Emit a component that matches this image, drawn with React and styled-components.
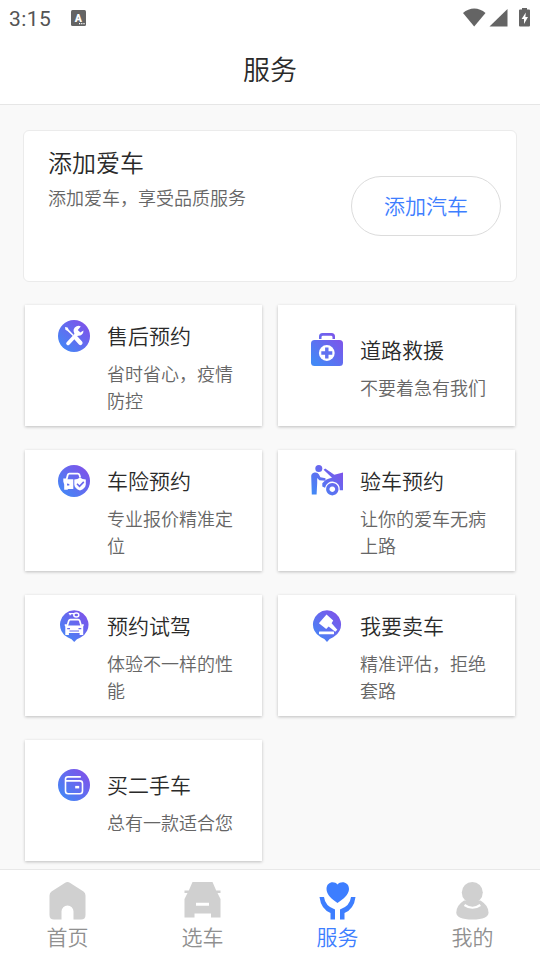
import { useState } from "react";
import styled, { createGlobalStyle } from "styled-components";

const services = [
  { title: "售后预约", desc: "省时省心，疫情防控", icon: RepairIcon },
  { title: "道路救援", desc: "不要着急有我们", icon: RescueIcon },
  { title: "车险预约", desc: "专业报价精准定位", icon: InsuranceIcon },
  { title: "验车预约", desc: "让你的爱车无病上路", icon: InspectIcon },
  { title: "预约试驾", desc: "体验不一样的性能", icon: TestDriveIcon },
  { title: "我要卖车", desc: "精准评估，拒绝套路", icon: SellIcon },
  { title: "买二手车", desc: "总有一款适合您", icon: WalletIcon },
];

const tabs = [
  { label: "首页", icon: HomeIcon },
  { label: "选车", icon: CarIcon },
  { label: "服务", icon: ServiceIcon },
  { label: "我的", icon: MineIcon },
];

function App() {
  const [active, setActive] = useState("服务");

  return (
    <Screen>
      <GlobalStyle />
      <StatusBar>
        <Time>3:15</Time>
        <KeyboardIcon />
        <StatusIcons />
      </StatusBar>
      <Header>服务</Header>
      <Content>
        <AddCard>
          <AddText>
            <AddTitle>添加爱车</AddTitle>
            <AddDesc>添加爱车，享受品质服务</AddDesc>
          </AddText>
          <AddButton>添加汽车</AddButton>
        </AddCard>
        <ServiceGrid>
          {services.map(({ title, desc, icon: Icon }) => (
            <ServiceCard key={title}>
              <ServiceBody>
                <IconSlot>
                  <Icon />
                </IconSlot>
                <ServiceText>
                  <ServiceTitle>{title}</ServiceTitle>
                  <ServiceDesc>{desc}</ServiceDesc>
                </ServiceText>
              </ServiceBody>
            </ServiceCard>
          ))}
        </ServiceGrid>
      </Content>
      <TabBar>
        {tabs.map(({ label, icon: Icon }) => (
          <Tab
            key={label}
            $active={active === label}
            onClick={() => setActive(label)}
          >
            <Icon />
            <TabLabel $active={active === label}>{label}</TabLabel>
          </Tab>
        ))}
      </TabBar>
    </Screen>
  );
}

function KeyboardIcon() {
  return (
    <svg width="15" height="16" viewBox="0 0 15 16">
      <rect width="15" height="16" rx="1.5" fill="#646464" />
      <KeyboardLetter x="7.4" y="11.6" textAnchor="middle">
        A
      </KeyboardLetter>
      <path d="M8 13.6h1.2M10.2 13.6h1.2M12.4 13.6h1.2" stroke="#fff" strokeWidth="1.2" />
    </svg>
  );
}

function StatusIcons() {
  return (
    <StatusRight width="70" height="20" viewBox="0 0 70 20" fill="#646464">
      <path d="M0 5C6.500-1 16-1 22.500 5L11.200 18.500Z" />
      <path d="M44.500 1V18.500H26.500Z" />
      <path d="M59 1.500V0H64V1.500H66Q67 1.500 67 2.500V17.500Q67 18.500 66 18.500H57Q56 18.500 56 17.500V2.500Q56 1.500 57 1.500Z" />
      <path d="M62.800 4.500 58.600 11H61V16L65 9H62.400Z" fill="#fff" />
    </StatusRight>
  );
}

function Gradient({ id }) {
  return (
    <defs>
      <linearGradient id={id} x1="3" y1="29" x2="28" y2="4" gradientUnits="userSpaceOnUse">
        <stop offset="0" stopColor="#4388f6" />
        <stop offset="1" stopColor="#7d54ea" />
      </linearGradient>
    </defs>
  );
}

function RepairIcon() {
  return (
    <svg width="32" height="32" viewBox="0 0 32 32">
      <Gradient id="repair" />
      <circle cx="16" cy="16" r="16" fill="url(#repair)" />
      <path d="M10 23.400 20 12.800" stroke="#fff" strokeWidth="3.6" strokeLinecap="round" />
      <path
        d="M22.800 6.400A5 5 0 1 0 25.500 10.600L22.200 12.400 19.800 10Z"
        fill="#fff"
      />
      <path d="M7 7 9.600 7.600 10.800 9.800 15.800 15 14.800 16 9.500 11 7.400 9.800Z" fill="#fff" />
      <path d="M18 18 22.500 23" stroke="#fff" strokeWidth="4.2" strokeLinecap="round" />
    </svg>
  );
}

function RescueIcon() {
  return (
    <RescueSvg width="32" height="34" viewBox="0 0 32 34">
      <Gradient id="rescue" />
      <g fill="url(#rescue)">
        <path d="M8 6V3.500Q8 0 11.500 0H20.500Q24 0 24 3.500V6H21.500V4.200Q21.500 2.800 20 2.800H12Q10.500 2.800 10.500 4.200V6Z" />
        <rect y="7" width="32" height="26" rx="3.500" />
      </g>
      <circle cx="15.800" cy="20" r="7.900" fill="#fff" />
      <path d="M15.800 14.500V25.500M10.300 20H21.300" stroke="#6072f0" strokeWidth="3.400" />
    </RescueSvg>
  );
}

function InsuranceIcon() {
  return (
    <svg width="32" height="32" viewBox="0 0 32 32">
      <Gradient id="insurance" />
      <circle cx="16" cy="16" r="16" fill="url(#insurance)" />
      <path
        d="M8.300 15.500 9.800 9.800Q10.200 8.600 11.400 8.600H19.800Q21 8.600 21.400 9.800L22.200 12.500"
        fill="none"
        stroke="#fff"
        strokeWidth="1.800"
      />
      <path d="M5.300 13.500H8L9 14.300H15.300V24H9.800V24.800H6.200V19.500L5.300 16.500Z" fill="#fff" />
      <path d="M9 18.600 11.300 19V20.500H9Z" fill="#6172f0" />
      <path
        d="M22 12.600Q24.300 14.500 27.800 14.600V19.500Q27.400 23.500 22 25.500 16.600 23.500 16.300 19.500V14.600Q19.700 14.500 22 12.600Z"
        fill="#fff"
      />
      <path d="M19 18.800 21.500 21.300 25.800 16.900" fill="none" stroke="#6967ed" strokeWidth="1.600" />
    </svg>
  );
}

function InspectIcon() {
  return (
    <svg width="32" height="32" viewBox="0 0 32 32">
      <Gradient id="inspect" />
      <g fill="url(#inspect)">
        <circle cx="7.800" cy="3.500" r="3.500" />
        <path d="M3.500 7.500Q6.500 7 7.800 9.300L9.400 12.300 14.500 13.200V15.700L8.300 15.200 6.200 13V18L5.600 29.500H.8L.2 11Q.4 8 3.500 7.500Z" />
        <path d="M12.600 4.800 14.200 3.400 23.300 9.800 32 7.500V25.300H28.800A7.500 7.500 0 0 0 14 22.800L11.300 21.600V18.200Q15 13.600 21 12.700Z" />
        <path
          fillRule="evenodd"
          d="M21.300 18A6.200 6.200 0 1 1 21.290 18ZM21.300 21.400A2.800 2.800 0 1 0 21.310 21.400Z"
        />
      </g>
    </svg>
  );
}

function TestDriveIcon() {
  return (
    <svg width="32" height="32" viewBox="0 0 32 32">
      <Gradient id="drive" />
      <path
        d="M16.200 .3A14.400 14.400 0 0 1 22.500 27.600Q18.500 29 16.200 32 14 29 10 27.600A14.400 14.400 0 0 1 16.200 .3Z"
        fill="url(#drive)"
      />
      <path d="M10.800 3.600H16M12.200 3.600V5.200" stroke="#fff" strokeWidth="1.300" />
      <ellipse cx="18.300" cy="4.900" rx="2.500" ry="2" fill="none" stroke="#fff" strokeWidth="1.500" />
      <path
        d="M9.200 16 10.800 10.800Q11.200 9.700 12.300 9.700H20.200Q21.300 9.700 21.700 10.800L23.300 16"
        fill="none"
        stroke="#fff"
        strokeWidth="1.700"
      />
      <path d="M6.700 14.200H8.800V15.600H23.700V14.200H25.800V15.600L25.200 16.500V25H21.600V22.900H10.900V25H7.300V16.500L6.700 15.600Z" fill="#fff" />
      <path d="M9.200 18.700H12M20.500 18.700H23.300M11.500 21H21" stroke="#686bed" strokeWidth="1.200" />
    </svg>
  );
}

function SellIcon() {
  return (
    <svg width="32" height="32" viewBox="0 0 32 32">
      <Gradient id="sell" />
      <path
        d="M16 .3A14.200 14.200 0 0 1 22.200 27.200Q18.300 28.500 16 32 13.700 28.500 9.800 27.200A14.200 14.200 0 0 1 16 .3Z"
        fill="url(#sell)"
      />
      <path d="M15.500 4.600 22.200 10.600 20.600 13.200 26.300 19.800 24.300 21.800 17.600 16.500 15.200 19 7.900 13.200Z" fill="#fff" />
      <rect x="8" y="21.400" width="15" height="2.800" rx=".5" fill="#fff" />
    </svg>
  );
}

function WalletIcon() {
  return (
    <svg width="32" height="32" viewBox="0 0 32 32">
      <Gradient id="wallet" />
      <circle cx="16" cy="16" r="16" fill="url(#wallet)" />
      <path
        d="M22.800 7.900H10Q7.500 7.900 7.500 10V22Q7.500 24.700 10.200 24.700H21.800Q24.500 24.700 24.500 22V14.500Q24.500 11.900 21.800 11.900H7.500"
        fill="none"
        stroke="#fff"
        strokeWidth="1.600"
      />
      <rect x="17.200" y="16.900" width="4" height="2.500" fill="#fff" />
    </svg>
  );
}

function HomeIcon() {
  return (
    <svg width="37" height="38" viewBox="0 0 37 38" fill="currentColor">
      <path d="M15.800 1Q18.500-.8 21.200 1L34.500 9.500Q36.500 11 36.500 13.500V33Q36.500 37.500 32 37.500H24.500V29.500A6 6 0 0 0 12.500 29.500V37.500H5Q.5 37.500 .5 33V13.500Q.5 11 2.500 9.500Z" />
    </svg>
  );
}

function CarIcon() {
  return (
    <svg width="37" height="38" viewBox="0 0 37 38" fill="currentColor">
      <path
        fillRule="evenodd"
        d="M8.500 0H28.500L32.200 8.500H36.500V11H33.500L36.500 17V35.500H27V31.500H10.500V35.500H.5V17L3.500 11H.5V8.500H4.800ZM12 20.700V23.800H25V20.700Z"
      />
    </svg>
  );
}

function ServiceIcon() {
  return (
    <svg width="37" height="38" viewBox="0 0 37 38" fill="currentColor">
      <path d="M18.500 2.500C21.500-1.500 30-.5 30 7 30 12.500 24 17.500 18.500 21 13 17.500 7.500 12.500 7.500 7 7.500-.5 15.500-1.500 18.500 2.500Z" />
      <path d="M.5 15H5Q6 24 16 27.500V37.500H11.500V31Q2 27 .5 15ZM36.500 15H32Q31 24 21 27.500V37.500H25.500V31Q35 27 36.500 15Z" />
    </svg>
  );
}

function MineIcon() {
  return (
    <svg width="37" height="38" viewBox="0 0 37 38" fill="currentColor">
      <circle cx="18.300" cy="10.500" r="10.500" />
      <path d="M10 18.500H26.500Q34.500 23.500 34.500 30.500 34.500 37.500 18.500 37.500 2.300 37.500 2.300 30.500 2.300 23.500 10 18.500Z" />
      <path d="M10.500 23Q18.500 28.500 26.300 23" fill="none" stroke="#fff" strokeWidth="2.200" />
    </svg>
  );
}

const GlobalStyle = createGlobalStyle`
  * {
    box-sizing: border-box;
  }

  body {
    margin: 0;
    font-family: "Noto Sans CJK SC", sans-serif;
    font-weight: 350;
  }
`;

const Screen = styled.div`
  display: flex;
  flex-direction: column;
  width: 540px;
  height: 960px;
  overflow: hidden;
  background: #f9f9f9;
`;

const StatusBar = styled.div`
  display: flex;
  flex-shrink: 0;
  align-items: center;
  height: 36px;
  padding: 0 7px 0 9px;
  background: #fff;
`;

const Time = styled.span`
  width: 62px;
  padding-top: 2px;
  font-family: Roboto, sans-serif;
  font-size: 21px;
  font-weight: 400;
  letter-spacing: 0.4px;
  line-height: 36px;
  color: #545454;
`;

const KeyboardLetter = styled.text`
  fill: #fff;
  font-family: Roboto, sans-serif;
  font-size: 10.5px;
  font-weight: 900;
`;

const StatusRight = styled.svg`
  margin-left: auto;
`;

const Header = styled.header`
  flex-shrink: 0;
  height: 69px;
  border-bottom: 1px solid #e6e6e6;
  background: #fff;
  color: #2a2a2a;
  font-size: 27px;
  line-height: 66px;
  text-align: center;
`;

const Content = styled.main`
  flex: 1;
  min-height: 0;
  padding: 25px 23px 0;
`;

const AddCard = styled.section`
  display: flex;
  align-items: center;
  justify-content: space-between;
  height: 152px;
  padding: 0 15px 0 24px;
  border: 1px solid #ebebeb;
  border-radius: 6px;
  background: #fff;
`;

const AddText = styled.div`
  align-self: flex-start;
  padding-top: 13px;
`;

const AddTitle = styled.h2`
  margin: 0;
  font-size: 24px;
  font-weight: 350;
  line-height: 36px;
  color: #2a2a2a;
`;

const AddDesc = styled.p`
  margin: 4px 0 0;
  font-size: 18px;
  line-height: 27px;
  color: #666;
`;

const AddButton = styled.button`
  width: 150px;
  height: 60px;
  padding: 0 0 2px;
  border: 1px solid #dcdcdc;
  border-radius: 30px;
  background: #fff;
  color: #3d7eff;
  font-family: inherit;
  font-size: 21px;
  font-weight: 350;
`;

const ServiceGrid = styled.div`
  display: grid;
  grid-template-columns: 237px 237px;
  gap: 24px 16px;
  padding: 23px 2px 0;
`;

const ServiceCard = styled.div`
  display: flex;
  align-items: center;
  height: 121px;
  padding-left: 33px;
  background: #fff;
  box-shadow: 0 1px 3px rgba(0, 0, 0, 0.24);
`;

const ServiceBody = styled.div`
  display: flex;
  align-items: flex-start;
  padding-bottom: 2px;
`;

const IconSlot = styled.div`
  display: flex;
  width: 49px;
  padding-top: 5px;
`;

const RescueSvg = styled.svg`
  margin-top: -1px;
`;

const ServiceText = styled.div`
  width: 130px;
`;

const ServiceTitle = styled.h3`
  margin: 0;
  padding-bottom: 5px;
  font-size: 21px;
  font-weight: 350;
  line-height: 40px;
  color: #2a2a2a;
`;

const ServiceDesc = styled.p`
  margin: 0;
  font-size: 18px;
  line-height: 27px;
  color: #666;
`;

const TabBar = styled.nav`
  display: flex;
  flex-shrink: 0;
  height: 91px;
  border-top: 1px solid #e8e8e8;
  background: #fff;
`;

const Tab = styled.div`
  display: flex;
  flex: 1;
  flex-direction: column;
  align-items: center;
  padding-top: 12px;
  color: ${({ $active }) => ($active ? "#3d7eff" : "#d0d0d0")};
`;

const TabLabel = styled.span`
  font-size: 21px;
  line-height: 32px;
  color: ${({ $active }) => ($active ? "#3d7eff" : "#909090")};
`;

export default App;
